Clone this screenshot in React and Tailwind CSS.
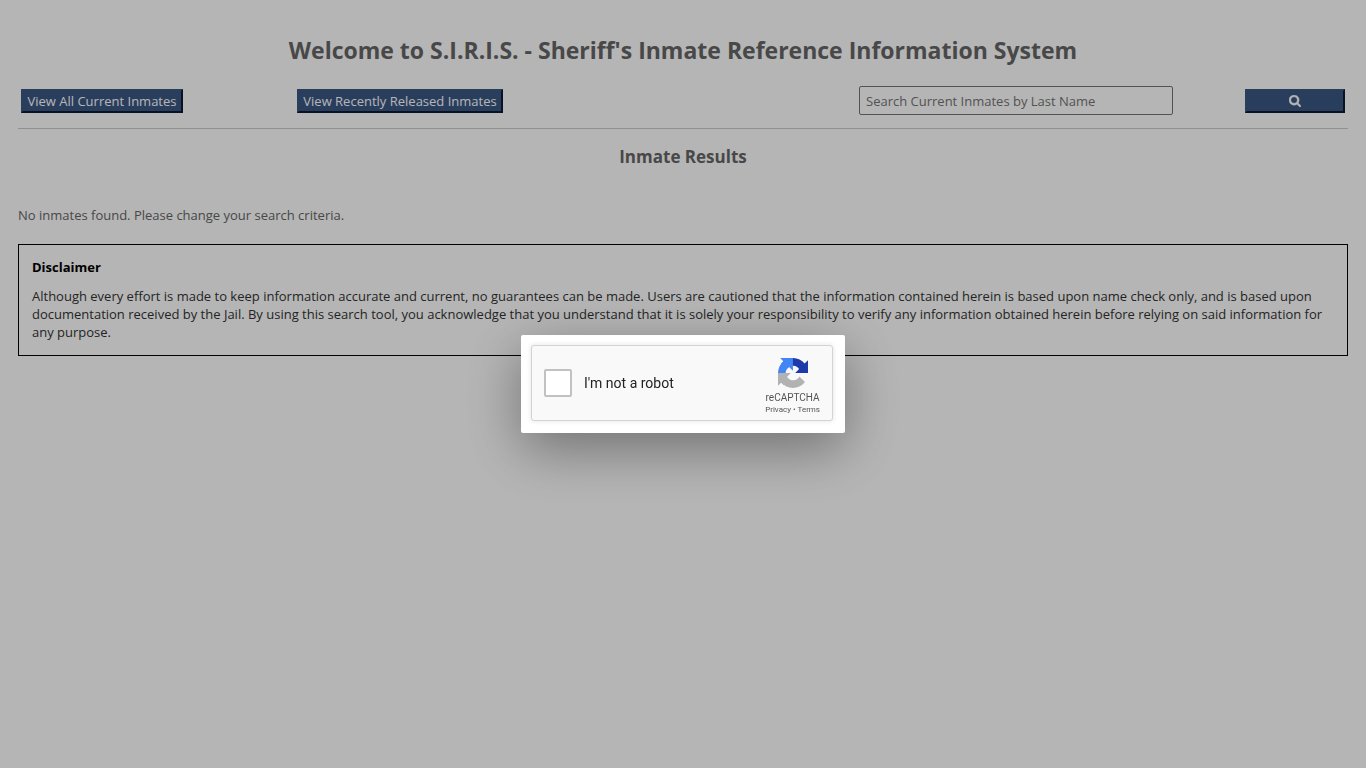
import { useState } from "react";

/* ── icons ───────────────────────────────────────────────────────────────── */

function SearchIcon() {
  return (
    <svg viewBox="0 0 1664 1664" className="h-3 w-3" fill="currentColor" stroke="currentColor" strokeWidth="60" aria-hidden="true">
      <path d="M1152 704q0-185-131.500-316.500T704 256 387.500 387.500 256 704t131.500 316.500T704 1152t316.500-131.500T1152 704zm512 832q0 52-38 90t-90 38q-54 0-90-38l-343-342q-179 124-399 124-143 0-273.500-55.500t-225-150-150-225T0 704t55.500-273.500 150-225 225-150T704 0t273.500 55.500 225 150 150 225T1408 704q0 220-124 399l343 343q37 37 37 90z" />
    </svg>
  );
}

function RecaptchaLogo() {
  return (
    <svg viewBox="0 0 64 64" className="h-[30px] w-[30px]" aria-hidden="true">
      <path fill="#1c3aa9" d="M64 31.955l-.033-1.37V4.687l-7.16 7.16C50.948 4.674 42.033.093 32.05.093c-10.4 0-19.622 4.96-25.458 12.64l11.736 11.86a15.55 15.55 0 0 1 4.754-5.334c2.05-1.6 4.952-2.906 8.968-2.906.485 0 .86.057 1.135.163 4.976.393 9.288 3.14 11.828 7.124l-8.307 8.307L64 31.953" />
      <path fill="#4285f4" d="M31.862.094l-1.37.033H4.594l7.16 7.16C4.58 13.147 0 22.06 0 32.046c0 10.4 4.96 19.622 12.64 25.458L24.5 45.768a15.55 15.55 0 0 1-5.334-4.754c-1.6-2.05-2.906-4.952-2.906-8.968 0-.485.057-.86.163-1.135.393-4.976 3.14-9.288 7.124-11.828l8.307 8.307L31.86.095" />
      <path fill="#b2b2b2" d="M.001 32.045l.033 1.37v25.898l7.16-7.16c5.86 7.173 14.774 11.754 24.76 11.754 10.4 0 19.622-4.96 25.458-12.64l-11.736-11.86a15.55 15.55 0 0 1-4.754 5.334c-2.05 1.6-4.952 2.906-8.968 2.906-.485 0-.86-.057-1.135-.163-4.976-.393-9.288-3.14-11.828-7.124l8.307-8.307c-10.522.04-22.4.066-27.295-.005" />
    </svg>
  );
}

/* ── toolbar ─────────────────────────────────────────────────────────────── */

const BUTTON =
  "flex h-6 items-center justify-center border-2 border-t-[#3a5683] border-l-[#3a5683] border-r-[#0b1a33] border-b-[#0b1a33] bg-[#3a5683] text-[13px] whitespace-nowrap text-white";

function Toolbar({ query, onQuery }) {
  return (
    <form
      onSubmit={(e) => e.preventDefault()}
      className="flex items-center justify-between border-b border-[#cfcaca] px-[3px] pb-[13px]"
    >
      <div className="flex items-center gap-[114px]">
        <button type="button" className={`${BUTTON} w-[162px]`}>View All Current Inmates</button>
        <button type="button" className={`${BUTTON} w-[206px]`}>View Recently Released Inmates</button>
      </div>
      <div className="flex items-center gap-[72px]">
        <input
          type="text"
          aria-label="Search Current Inmates by Last Name"
          placeholder="Search Current Inmates by Last Name"
          value={query}
          onChange={(e) => onQuery(e.target.value)}
          className="h-[29px] w-[314px] rounded-xs border border-[#767676] bg-white px-1.5 text-[13px] text-black placeholder:text-[#757575]"
        />
        <button type="submit" aria-label="Search" className={`${BUTTON} w-[100px]`}>
          <SearchIcon />
        </button>
      </div>
    </form>
  );
}

/* ── captcha ─────────────────────────────────────────────────────────────── */

function CaptchaDialog() {
  return (
    <div className="fixed inset-0 flex items-center justify-center bg-black/29">
      <div
        role="dialog"
        aria-label="reCAPTCHA"
        className="rounded-xs bg-white pt-2.5 pr-3 pb-3 pl-2.5 shadow-[0_16px_56px_rgba(0,0,0,0.38)]"
      >
        <div className="flex h-[76px] w-[302px] items-center justify-between rounded-[3px] border border-[#d3d3d3] bg-[#f9f9f9] pr-3 pl-3 font-[Roboto,sans-serif] shadow-[0_0_4px_1px_rgba(0,0,0,0.08)]">
          <label className="flex items-center gap-3 text-sm text-[#222]">
            <input
              type="checkbox"
              className="h-7 w-7 appearance-none rounded-xs border-2 border-[#c1c1c1] bg-white"
            />
            I'm not a robot
          </label>
          <div className="flex flex-col items-center pt-2 text-[#555]">
            <RecaptchaLogo />
            <div className="mt-1 text-[10px] leading-3">reCAPTCHA</div>
            <div className="text-[8px] leading-3">
              <a href="#privacy">Privacy</a>
              <span aria-hidden="true"> • </span>
              <a href="#terms">Terms</a>
            </div>
          </div>
        </div>
      </div>
    </div>
  );
}

/* ── page ────────────────────────────────────────────────────────────────── */

export default function App() {
  const [query, setQuery] = useState("");

  return (
    <div className="min-h-screen bg-white font-['Open_Sans',sans-serif] text-[13px] leading-[18px] text-[#666]">
      <main className="px-[18px] pt-[34px]">
        <h1 className="mb-5 text-center text-[23px] leading-8 font-bold">
          Welcome to S.I.R.I.S. - Sheriff's Inmate Reference Information System
        </h1>

        <Toolbar query={query} onQuery={setQuery} />

        <h2 className="mt-4 text-center text-[17px] leading-6 font-bold">Inmate Results</h2>
        <p className="mt-[37px]">No inmates found. Please change your search criteria.</p>

        <section className="mt-5 border border-black px-[13px] pt-[13px] pb-3.5">
          <h3 className="font-bold text-black">Disclaimer</h3>
          <p className="mt-[11px] text-[#333]">
            Although every effort is made to keep information accurate and current, no guarantees can be made. Users
            are cautioned that the information contained herein is based upon name check only, and is based upon
            documentation received by the Jail. By using this search tool, you acknowledge that you understand that it
            is solely your responsibility to verify any information obtained herein before relying on said information
            for any purpose.
          </p>
        </section>
      </main>

      <CaptchaDialog />
    </div>
  );
}
